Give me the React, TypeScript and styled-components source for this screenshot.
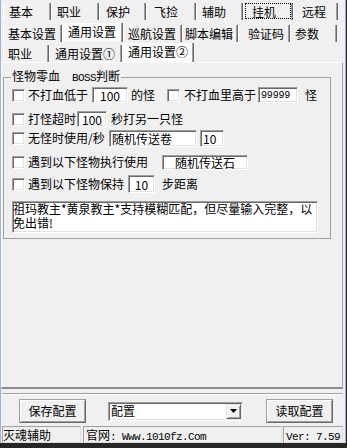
import React from 'react';
import styled, { createGlobalStyle, css } from 'styled-components';

const GlobalStyle = createGlobalStyle`
    html, body {
        margin: 0;
        padding: 0;
        background: #262626;
    }
    body {
        font-family: "Noto Sans CJK SC", "Noto Sans", sans-serif;
        font-size: 12px;
        color: #000;
    }
    * {
        box-sizing: border-box;
    }
`

const Window = styled.div`
    width: 346px;
    height: 443px;
    background: #f0f0f0;
    border-left: 1px solid #9cb2e4;
    border-right: 1px solid #9cb2e4;
    display: flex;
    flex-direction: column;
`

const TabStrip = styled.div<{ $h: number; $pb?: number }>`
    height: ${p => p.$h}px;
    flex-shrink: 0;
    display: flex;
    align-items: flex-end;
    padding-left: 2px;
    padding-bottom: ${p => p.$pb ?? 0}px;
`

const Tab = styled.div<{ $w: number; $pad: number; $active?: boolean; $focus?: boolean }>`
    position: relative;
    width: ${p => p.$w}px;
    height: ${p => (p.$active ? 19 : 17)}px;
    padding-left: ${p => p.$pad - 1}px;
    padding-bottom: ${p => (p.$active ? 2 : 0)}px;
    display: flex;
    align-items: center;
    line-height: 14px;
    white-space: nowrap;
    background: ${p => (p.$active ? '#fbfbfb' : 'transparent')};
    border-left: 1px solid #fff;
    border-right: 1px solid #696969;
    box-shadow: inset -1px 0 0 #a0a0a0;
    ${p => p.$focus && css`
        &::after {
            content: '';
            position: absolute;
            left: 1px;
            right: 1px;
            top: 0;
            bottom: 1px;
            border: 1px dotted #000;
        }
    `}
`

const Page = styled.div`
    flex: 1;
    margin-right: 2px;
    border-top: 1px solid #fff;
    border-left: 1px solid #fff;
    border-right: 1px solid #a0a0a0;
    border-bottom: 2px solid #8c8c8c;
    padding: 6px 0 0 1px;
`

const GroupBox = styled.fieldset`
    margin: 0;
    min-width: 0;
    width: 328px;
    padding: 1px 0 5px 8px;
    border: 1px solid #a0a0a0;
`

const Legend = styled.legend`
    padding: 0 1px;
    margin-left: -1px;
    line-height: 14px;
    white-space: pre;
`

const Row = styled.div<{ $mt: number }>`
    display: flex;
    align-items: center;
    height: 18px;
    margin-top: ${p => p.$mt}px;
    white-space: nowrap;
`

const Check = styled.span<{ $ml?: number }>`
    flex-shrink: 0;
    width: 13px;
    height: 13px;
    margin-left: ${p => p.$ml ?? 0}px;
    background: #fff;
    border: 1px solid;
    border-color: #a0a0a0 #fff #fff #a0a0a0;
    box-shadow: inset 1px 1px 0 #696969, inset -1px -1px 0 #e3e3e3;
`

const Label = styled.span<{ $ml?: number; $w?: number }>`
    flex-shrink: 0;
    margin-left: ${p => p.$ml ?? 0}px;
    ${p => p.$w && `width: ${p.$w}px;`}
    line-height: 14px;
`

const Field = styled.div<{ $w: number; $h: number; $ml?: number; $pl?: number; $center?: boolean }>`
    flex-shrink: 0;
    width: ${p => p.$w}px;
    height: ${p => p.$h}px;
    margin-left: ${p => p.$ml ?? 0}px;
    padding-left: ${p => p.$pl ?? 0}px;
    display: flex;
    align-items: center;
    justify-content: ${p => (p.$center ? 'center' : 'flex-start')};
    background: #fff;
    border: 1px solid;
    border-color: #a0a0a0 #fff #fff #a0a0a0;
    box-shadow: inset 1px 1px 0 #696969, inset -1px -1px 0 #e3e3e3;
    line-height: 13px;
    white-space: nowrap;
`

const Memo = styled.div`
    width: 306px;
    height: 32px;
    margin-top: 8px;
    background: #fff;
    border: 1px solid;
    border-color: #a0a0a0 #fff #fff #a0a0a0;
    box-shadow: inset 1px 1px 0 #696969, inset -1px -1px 0 #e3e3e3;
    line-height: 14px;
    overflow: hidden;
    & p {
        margin: 0;
        white-space: nowrap;
    }
`

const Mono = styled.span<{ $size?: number }>`
    font-family: "Liberation Mono", "DejaVu Sans Mono", monospace;
    font-size: ${p => p.$size ?? 11}px;
    letter-spacing: ${p => (p.$size === 10 ? -0.2 : -0.6)}px;
`

const Separator = styled.div`
    height: 2px;
    margin: 4px 2px 0 1px;
    border-top: 1px solid #a0a0a0;
    border-bottom: 1px solid #fff;
`

const ButtonBar = styled.div`
    display: flex;
    align-items: center;
    height: 24px;
    margin-top: 4px;
    padding-left: 18px;
`

const Button = styled.div<{ $ml?: number }>`
    width: 67px;
    height: 24px;
    margin-left: ${p => p.$ml ?? 0}px;
    display: flex;
    align-items: center;
    justify-content: center;
    border: 1px solid;
    border-color: #a0a0a0 #696969 #696969 #a0a0a0;
    box-shadow: inset 1px 1px 0 #fff, inset -1px -1px 0 #a0a0a0;
    line-height: 14px;
`

const Combo = styled.div`
    width: 135px;
    height: 19px;
    margin-left: 22px;
    display: flex;
    align-items: center;
    padding-left: 2px;
    background: #fff;
    border: 1px solid;
    border-color: #a0a0a0 #fff #fff #a0a0a0;
    box-shadow: inset 1px 1px 0 #696969, inset -1px -1px 0 #e3e3e3;
    & span {
        flex: 1;
        line-height: 14px;
    }
`

const DropButton = styled.div`
    width: 15px;
    height: 15px;
    margin-right: 1px;
    display: flex;
    align-items: center;
    justify-content: center;
    background: #f0f0f0;
    border: 1px solid;
    border-color: #e3e3e3 #696969 #696969 #e3e3e3;
    box-shadow: inset 1px 1px 0 #fff, inset -1px -1px 0 #a0a0a0;
`

const StatusBar = styled.div`
    display: flex;
    height: 17px;
    margin-top: 3px;
    padding-left: 1px;
`

const Panel = styled.div<{ $w: number; $ml?: number; $pl?: number }>`
    width: ${p => p.$w}px;
    margin-left: ${p => p.$ml ?? 0}px;
    padding-left: ${p => p.$pl ?? 0}px;
    border: 1px solid;
    border-color: #a0a0a0 #dcdcdc #dcdcdc #a0a0a0;
    line-height: 15px;
    white-space: nowrap;
    overflow: hidden;
`

const mainTabs: [string, number, number][] = [
    ['基本', 48, 6], ['职业', 48, 6], ['保护', 47, 7], ['飞捡', 50, 8],
    ['辅助', 47, 6], ['挂机', 50, 9], ['远程', 45, 9],
]
const subTabs: [string, number, number][] = [
    ['基本设置', 59, 5], ['通用设置', 61, 6], ['巡航设置', 59, 5],
    ['脚本编辑', 56, 3], ['验证码', 52, 10], ['参数', 47, 5],
]
const innerTabs: [string, number, number][] = [
    ['职业', 46, 5], ['通用设置①', 73, 6], ['通用设置②', 72, 6],
]

export default function App() {
    return (
        <>
            <GlobalStyle />
            <Window>
                <TabStrip $h={22} $pb={2}>
                    {mainTabs.map(([label, w, pad]) => (
                        <Tab key={label} $w={w} $pad={pad} $focus={label === '挂机'}>{label}</Tab>
                    ))}
                </TabStrip>
                <TabStrip $h={20}>
                    {subTabs.map(([label, w, pad]) => (
                        <Tab key={label} $w={w} $pad={pad} $active={label === '通用设置'}>{label}</Tab>
                    ))}
                </TabStrip>
                <TabStrip $h={20}>
                    {innerTabs.map(([label, w, pad]) => (
                        <Tab key={label} $w={w} $pad={pad} $active={label === '通用设置②'}>{label}</Tab>
                    ))}
                </TabStrip>

                <Page>
                    <GroupBox>
                        <Legend>怪物零血<Mono>  BOSS</Mono>判断</Legend>
                        <Row $mt={0}>
                            <Check />
                            <Label $ml={3}>不打血低于</Label>
                            <Field $w={36} $h={16} $ml={4} $center>100</Field>
                            <Label $ml={3}>的怪</Label>
                            <Check $ml={12} />
                            <Label $ml={4}>不打血里高于</Label>
                            <Field $w={40} $h={16} $ml={2} $pl={2}><Mono $size={10}>99999</Mono></Field>
                            <Label $ml={7}>怪</Label>
                        </Row>
                        <Row $mt={6}>
                            <Check />
                            <Label $ml={3}>打怪超时</Label>
                            <Field $w={30} $h={16} $ml={1} $center>100</Field>
                            <Label $ml={4}>秒打另一只怪</Label>
                        </Row>
                        <Row $mt={1}>
                            <Check />
                            <Label $ml={3} $w={78}>无怪时使用/秒</Label>
                            <Field $w={88} $h={17} $ml={3} $pl={2}>随机传送卷</Field>
                            <Field $w={24} $h={17} $ml={3} $pl={2}>10</Field>
                        </Row>
                        <Row $mt={6}>
                            <Check />
                            <Label $ml={3}>遇到以下怪物执行使用</Label>
                            <Field $w={86} $h={15} $ml={14} $pl={12}>随机传送石</Field>
                        </Row>
                        <Row $mt={4}>
                            <Check />
                            <Label $ml={3}>遇到以下怪物保持</Label>
                            <Field $w={27} $h={18} $ml={4} $center>10</Field>
                            <Label $ml={7}>步距离</Label>
                        </Row>
                        <Memo>
                            <p>祖玛教主*黄泉教主*支持模糊匹配，但尽量输入完整，以</p>
                            <p>免出错!</p>
                        </Memo>
                    </GroupBox>
                </Page>

                <Separator />

                <ButtonBar>
                    <Button>保存配置</Button>
                    <Combo>
                        <span>配置</span>
                        <DropButton>
                            <svg width="7" height="4" viewBox="0 0 7 4">
                                <polygon points="0,0 7,0 3.5,4" fill="#000" />
                            </svg>
                        </DropButton>
                    </Combo>
                    <Button $ml={23}>读取配置</Button>
                </ButtonBar>

                <StatusBar>
                    <Panel $w={79}>灭魂辅助</Panel>
                    <Panel $w={199} $ml={2} $pl={2}>官网<Mono>: Www.1010fz.Com</Mono></Panel>
                    <Panel $w={60} $ml={1} $pl={2}><Mono>Ver: 7.59</Mono></Panel>
                </StatusBar>
            </Window>
        </>
    )
}
